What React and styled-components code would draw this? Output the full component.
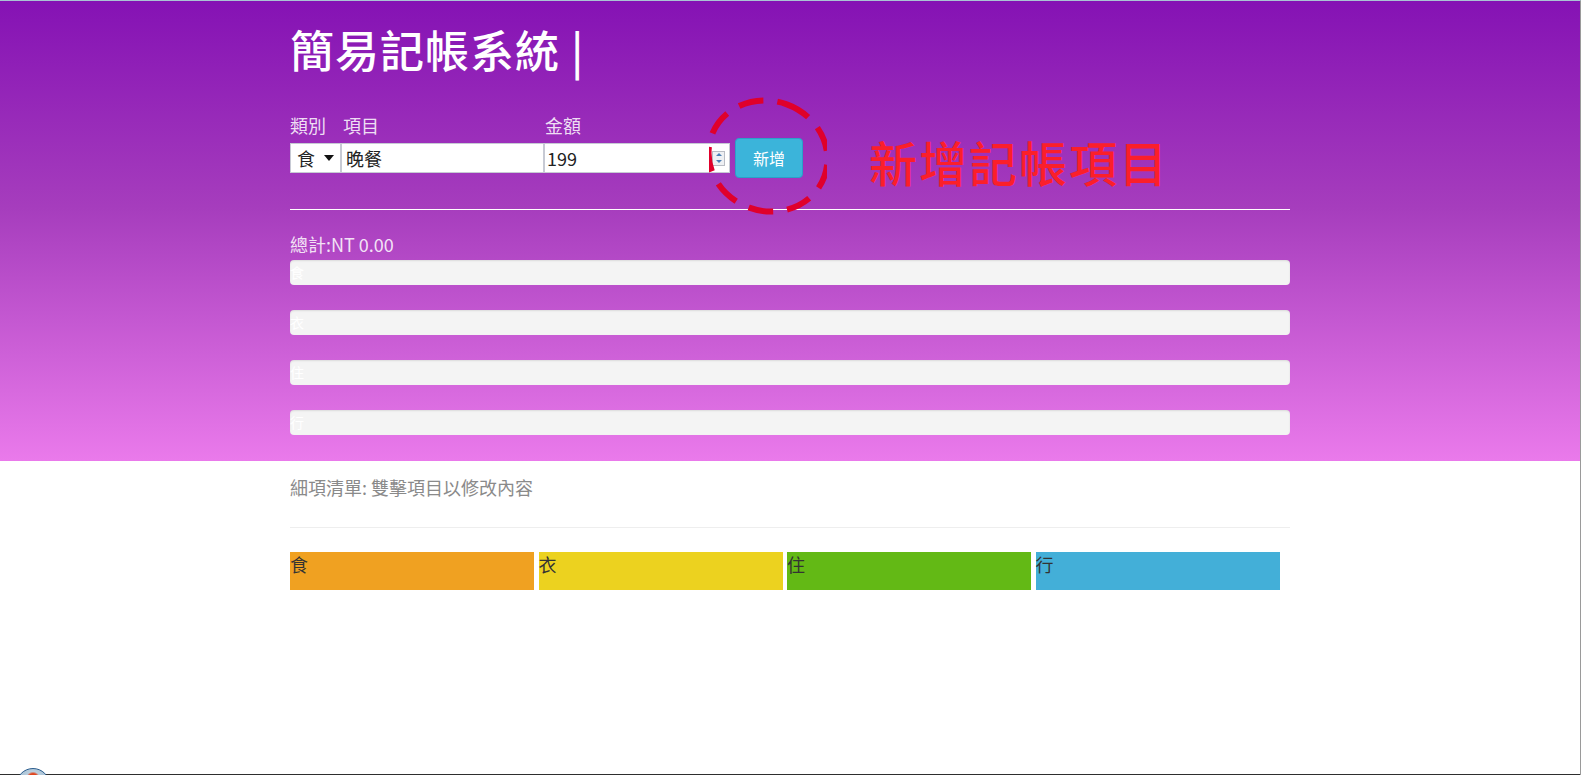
import React from 'react';
import styled, { createGlobalStyle } from 'styled-components';

const GlobalStyle = createGlobalStyle`
  html, body {
    margin: 0;
    padding: 0;
    background: #fff;
    overflow: hidden;
  }
  body {
    font-family: "Noto Sans CJK TC", "Liberation Sans", sans-serif;
  }
`;

const Page = styled.div`
  position: relative;
  width: 1581px;
  height: 775px;
  box-sizing: border-box;
  border-top: 1px solid #a9c4d4;
  border-right: 1px solid #9a9a9a;
  overflow: hidden;
`;

const Header = styled.header`
  height: 460px;
  box-sizing: border-box;
  padding-top: 22px;
  background: linear-gradient(to bottom, #8512b4 0%, #a63dbd 45%, #ea7aeb 100%);
`;

const Container = styled.div`
  width: 1000px;
  margin: 0 auto;
`;

const Title = styled.h1`
  margin: 0;
  font-size: 44px;
  line-height: 53px;
  font-weight: 500;
  color: #fff;
  letter-spacing: 1px;
`;

const Form = styled.form`
  position: relative;
  display: grid;
  grid-template-columns: 51px 203px 186px auto auto;
  grid-template-rows: 24px 40px;
  justify-content: start;
  row-gap: 1px;
  align-items: center;
  margin-top: 37px;
`;

const Label = styled.label`
  font-size: 18px;
  line-height: 24px;
  color: rgba(255, 255, 255, 0.86);
  padding-left: ${props => props.indent || 0}px;
`;

const Field = styled.div`
  display: flex;
  align-items: center;
  height: 30px;
  box-sizing: border-box;
  background: #fff;
  border: 1px solid #c7cad4;
`;

const SelectBox = styled(Field)`
  padding: 0 6px 0 6px;
  justify-content: space-between;
`;

const Select = styled.select`
  appearance: none;
  border: none;
  outline: none;
  background: transparent;
  font-family: inherit;
  font-size: 18px;
  color: #222;
  padding: 0;
  width: 22px;
`;

const Caret = styled.span`
  width: 0;
  height: 0;
  border-left: 5px solid transparent;
  border-right: 5px solid transparent;
  border-top: 6px solid #111;
`;

const TextInput = styled.input`
  flex: 1;
  min-width: 0;
  border: none;
  outline: none;
  background: transparent;
  font-family: inherit;
  font-size: 18px;
  color: #222;
  padding: 0 0 0 ${props => props.pad || 4}px;
`;

const Spinner = styled.div`
  display: flex;
  flex-direction: column;
  width: 11px;
  height: 13px;
  margin-right: 4px;
  border: 1px solid #b9bcc4;
  background: #eef0f3;
`;

const SpinHalf = styled.div`
  flex: 1;
  display: flex;
  align-items: center;
  justify-content: center;
  &::after {
    content: "";
    border-left: 3px solid transparent;
    border-right: 3px solid transparent;
    ${props => (props.up ? 'border-bottom: 3px solid #4a7fb5;' : 'border-top: 3px solid #4a7fb5;')}
  }
`;

const AddButton = styled.button`
  margin-left: 5px;
  width: 68px;
  height: 40px;
  border: 1px solid #2aa0c8;
  border-radius: 4px;
  background: #3bb4da;
  color: #fff;
  font-family: inherit;
  font-size: 16px;
  cursor: pointer;
`;

const Note = styled.div`
  align-self: start;
  margin: 3px 0 0 66px;
  font-size: 48px;
  line-height: 40px;
  font-weight: 500;
  letter-spacing: 2px;
  color: #fb1f2a;
  white-space: nowrap;
`;

const Ring = styled.svg`
  position: absolute;
  left: 419px;
  top: -21px;
  pointer-events: none;
`;

const Rule = styled.hr`
  border: none;
  height: 1px;
  margin: ${props => props.gap || 0}px 0 0;
  background: ${props => props.color || '#fff'};
`;

const Total = styled.div`
  margin-top: 22px;
  font-size: 18px;
  line-height: 24px;
  color: rgba(255, 255, 255, 0.86);
`;

const Bars = styled.div`
  display: flex;
  flex-direction: column;
  gap: 25px;
  margin-top: 4px;
`;

const Bar = styled.div`
  height: 25px;
  border-radius: 4px;
  background: #f4f4f4;
  box-shadow: inset 0 1px 2px rgba(0, 0, 0, 0.1);
  font-size: 14px;
  line-height: 25px;
  color: #fff;
  overflow: hidden;
`;

const Hint = styled.div`
  margin-top: 14px;
  font-size: 18px;
  line-height: 24px;
  color: #8a8a8a;
`;

const Columns = styled.div`
  display: grid;
  grid-template-columns: repeat(4, 244px);
  column-gap: 4.5px;
  margin-top: 24px;
`;

const Column = styled.div`
  height: 38px;
  background: ${props => props.bg};
  font-size: 18px;
  line-height: 24px;
  color: #333;
`;

const TaskbarEdge = styled.div`
  position: absolute;
  left: 0;
  right: 0;
  bottom: 0;
  height: 1px;
  background: #2e2e2e;
`;

const Orb = styled.div`
  position: absolute;
  left: 16px;
  bottom: -27px;
  width: 34px;
  height: 34px;
  box-sizing: border-box;
  border-radius: 50%;
  border: 1px solid #2b5d8e;
  background: radial-gradient(circle at 50% 30%, #e0461f 0 5px, #b9cfdf 7px, #7f9db8 100%);
`;

const categories = [
  { name: '食', color: '#f0a121' },
  { name: '衣', color: '#ecd21f' },
  { name: '住', color: '#63b915' },
  { name: '行', color: '#43afd8' },
];

export default function App() {
  return (
    <Page>
      <GlobalStyle />
      <Header>
        <Container>
          <Title>簡易記帳系統 |</Title>
          <Form onSubmit={e => e.preventDefault()}>
            <Label>類別</Label>
            <Label indent={2}>項目</Label>
            <Label indent={1}>金額</Label>
            <span />
            <span />

            <SelectBox>
              <Select defaultValue="食">
                {categories.map(c => (
                  <option key={c.name} value={c.name}>{c.name}</option>
                ))}
              </Select>
              <Caret />
            </SelectBox>
            <Field>
              <TextInput type="text" defaultValue="晚餐" />
            </Field>
            <Field>
              <TextInput type="text" defaultValue="199" pad={2} />
              <Spinner>
                <SpinHalf up />
                <SpinHalf />
              </Spinner>
            </Field>
            <AddButton type="submit">新增</AddButton>
            <Note>新增記帳項目</Note>

            <Ring width="118" height="128" viewBox="0 0 118 128">
              <ellipse
                cx="59"
                cy="64"
                rx="55"
                ry="60"
                fill="none"
                stroke="#e0002b"
                strokeWidth="6"
                strokeDasharray="25 14"
                transform="rotate(-70 59 64)"
              />
            </Ring>
          </Form>

          <Rule gap={31} />
          <Total>總計:NT 0.00</Total>
          <Bars>
            {categories.map(c => (
              <Bar key={c.name}>{c.name}</Bar>
            ))}
          </Bars>
        </Container>
      </Header>

      <Container>
        <Hint>細項清單: 雙擊項目以修改內容</Hint>
        <Rule gap={28} color="#eeeeee" />
        <Columns>
          {categories.map(c => (
            <Column key={c.name} bg={c.color}>{c.name}</Column>
          ))}
        </Columns>
      </Container>

      <TaskbarEdge />
      <Orb />
    </Page>
  );
}
